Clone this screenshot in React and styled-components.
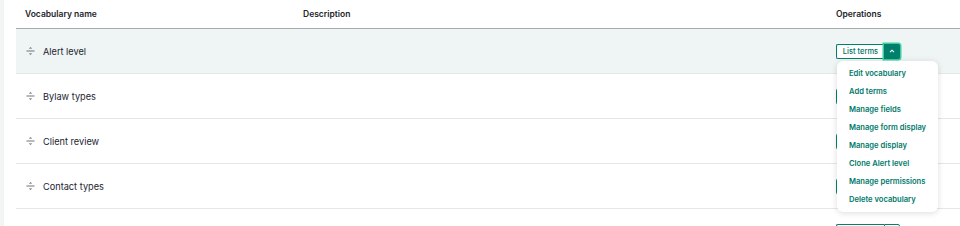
import React from 'react';
import styled, { createGlobalStyle } from 'styled-components';

const GlobalStyle = createGlobalStyle`
    html, body {
        margin: 0;
        padding: 0;
        background: #f3f5f5;
        font-family: Inter, "Noto Sans", Arial, sans-serif;
        overflow: hidden;
    }
`;

const Page = styled.div`
    padding-left: 4px;
    height: 226px;
`;

const Panel = styled.div`
    background: #ffffff;
    height: 100%;
    padding-left: 12px;
`;

const Table = styled.div`
    display: grid;
    grid-template-columns: 278px 533px 1fr;
`;

const HeadCell = styled.div`
    height: 28px;
    display: flex;
    align-items: center;
    padding-left: 9px;
    font-size: 8.5px;
    font-weight: 600;
    color: #232429;
    border-bottom: 1px solid #a8abab;
`;

const Cell = styled.div`
    position: relative;
    height: 44px;
    display: flex;
    align-items: center;
    padding-left: 9px;
    font-size: 9.2px;
    color: #222330;
    background: ${(p) => (p.$active ? '#eff5f4' : '#ffffff')};
    border-bottom: 1px solid #e3e7e7;
`;

const Handle = styled.svg`
    width: 9px;
    height: 10px;
    margin: 0 8px 0 1px;
    flex-shrink: 0;
`;

const SplitButton = styled.div`
    display: flex;
    align-items: stretch;
    height: 15px;
`;

const MainButton = styled.button`
    width: 48px;
    height: 15px;
    box-sizing: border-box;
    border: 1px solid #00816d;
    border-right: none;
    border-radius: 2px 0 0 2px;
    background: #fff;
    color: #00735f;
    font-family: inherit;
    font-size: 7.5px;
    font-weight: 500;
    padding: 0;
`;

const ToggleButton = styled.button`
    width: 16px;
    height: 15px;
    box-sizing: border-box;
    border-radius: 0 2px 2px 0;
    background: ${(p) => (p.$open ? '#00806c' : '#ffffff')};
    border: ${(p) => (p.$open ? 'none' : '1px solid #00816d')};
    box-shadow: ${(p) => (p.$open ? '0 0 0 1.5px #3fcf9f' : 'none')};
    display: flex;
    align-items: center;
    justify-content: center;
    padding: 0;
`;

const Menu = styled.ul`
    position: absolute;
    left: 10px;
    top: 32px;
    width: 101px;
    margin: 0;
    padding: 3px 0 4px;
    list-style: none;
    background: #fff;
    border-radius: 6px;
    box-shadow: 0 1px 6px rgba(0, 0, 0, 0.14);
    z-index: 5;
`;

const MenuItem = styled.li`
    height: 18px;
    display: flex;
    align-items: center;
    padding-left: 12px;
    font-size: 7.6px;
    font-weight: 600;
    color: #00796a;
    white-space: nowrap;
`;

const rows = ['Alert level', 'Bylaw types', 'Client review', 'Contact types', 'Document types'];

const menuItems = [
    'Edit vocabulary',
    'Add terms',
    'Manage fields',
    'Manage form display',
    'Manage display',
    'Clone Alert level',
    'Manage permissions',
    'Delete vocabulary',
];

function DragHandle() {
    return (
        <Handle viewBox="0 0 9 10">
            <path d="M4.5 0.8 L6.2 2.8 H2.8 Z" fill="#8a8d8f" />
            <rect x="0.5" y="4.5" width="8" height="1" fill="#6f7274" />
            <path d="M4.5 9.2 L6.2 7.2 H2.8 Z" fill="#8a8d8f" />
        </Handle>
    );
}

export default function App() {
    return (
        <Page>
            <GlobalStyle />
            <Panel>
                <Table>
                    <HeadCell>Vocabulary name</HeadCell>
                    <HeadCell>Description</HeadCell>
                    <HeadCell>Operations</HeadCell>
                    {rows.map((name, i) => (
                        <React.Fragment key={name}>
                            <Cell $active={i === 0}>
                                <DragHandle />
                                {name}
                            </Cell>
                            <Cell $active={i === 0} />
                            <Cell $active={i === 0}>
                                <SplitButton>
                                    <MainButton>List terms</MainButton>
                                    <ToggleButton $open={i === 0}>
                                        <svg width="6" height="4" viewBox="0 0 6 4">
                                            <path
                                                d="M1 3.2 L3 1.2 L5 3.2"
                                                stroke={i === 0 ? '#ffffff' : '#00816d'}
                                                strokeWidth="1.1"
                                                fill="none"
                                            />
                                        </svg>
                                    </ToggleButton>
                                </SplitButton>
                                {i === 0 && (
                                    <Menu>
                                        {menuItems.map((m) => (
                                            <MenuItem key={m}>{m}</MenuItem>
                                        ))}
                                    </Menu>
                                )}
                            </Cell>
                        </React.Fragment>
                    ))}
                </Table>
            </Panel>
        </Page>
    );
}
